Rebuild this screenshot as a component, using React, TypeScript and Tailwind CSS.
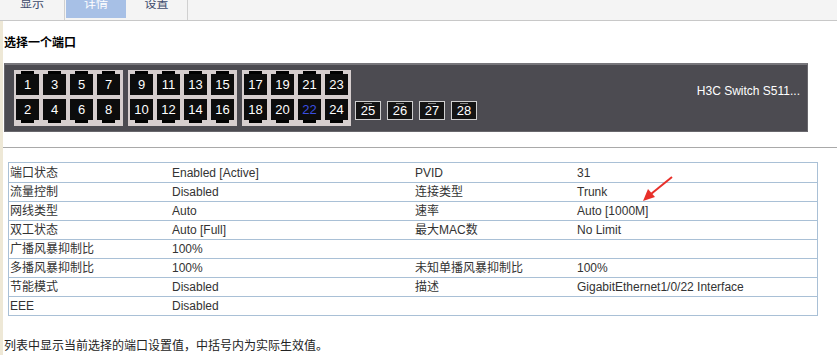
import React from 'react';

const groups = [
  { top: [1, 3, 5, 7], bottom: [2, 4, 6, 8] },
  { top: [9, 11, 13, 15], bottom: [10, 12, 14, 16] },
  { top: [17, 19, 21, 23], bottom: [18, 20, 22, 24] },
];

const rows: [string, string, string, string][] = [
  ['端口状态', 'Enabled [Active]', 'PVID', '31'],
  ['流量控制', 'Disabled', '连接类型', 'Trunk'],
  ['网线类型', 'Auto', '速率', 'Auto [1000M]'],
  ['双工状态', 'Auto [Full]', '最大MAC数', 'No Limit'],
  ['广播风暴抑制比', '100%', '', ''],
  ['多播风暴抑制比', '100%', '未知单播风暴抑制比', '100%'],
  ['节能模式', 'Disabled', '描述', 'GigabitEthernet1/0/22 Interface'],
  ['EEE', 'Disabled', '', ''],
];

const font = "font-['Liberation_Sans','Noto_Sans_CJK_SC',sans-serif]";

function Port({ n, up }: { n: number; up: boolean }) {
  const tab = <div className="mx-auto h-[3px] w-[13px] bg-black" />;
  return (
    <div className="flex w-[23px] flex-col">
      {up && tab}
      <div
        className={`flex h-[21px] w-[23px] items-center justify-center bg-[#0c0c0c] text-[13px] leading-none ${
          n === 22 ? 'text-[#3b4fe0]' : 'text-white'
        }`}
      >
        {n}
      </div>
      {!up && tab}
    </div>
  );
}

function Sfp({ n }: { n: number }) {
  return (
    <div className="relative flex h-[19px] w-[26px] items-center justify-center border border-[#d0d0d0] bg-[#141414] text-[13px] leading-none text-white">
      <div className="absolute left-[8px] top-[1px] h-[1px] w-[8px] bg-[#8a8a8a]" />
      {n}
    </div>
  );
}

export default function App() {
  return (
    <div className={`relative h-[355px] w-[837px] overflow-hidden bg-white text-[12px] text-[#333] ${font}`}>
      {/* tab bar */}
      <div className="flex h-[21px] border-b border-[#c8c8c8] bg-[#f4f4f4]">
        <div className="flex w-[65px] justify-center border-r border-[#d0d0d0] text-[#3d4a6b]">
          <span className="-mt-[3px] leading-[14px]">显示</span>
        </div>
        <div className="ml-[1px] flex h-[18px] w-[60px] justify-center bg-[#a7c0e6] text-white">
          <span className="-mt-[3px] leading-[14px]">详情</span>
        </div>
        <div className="flex w-[62px] justify-center border-r border-[#d0d0d0] text-[#3d4a6b]">
          <span className="-mt-[3px] leading-[14px]">设置</span>
        </div>
      </div>

      <div className="flex h-[334px]">
        <div className="w-[3px] bg-[#eee8d6]" />
        <div className="flex-1">
          <div className="mt-[15px] pl-[1px] font-bold leading-[14px] text-black">选择一个端口</div>

          {/* switch panel */}
          <div className="ml-[1px] mt-[13px] flex h-[69px] w-[804px] items-start border border-t-2 border-[#68676c] border-t-[#77767b] bg-[#4c4b51] pl-[9px] pt-[5px]">
            <div className="flex items-end gap-[5px]">
              {groups.map((g, i) => (
                <div key={i} className="flex flex-col gap-[4px] bg-[#d6cece] pb-[3px] pl-[2px] pr-[3px] pt-[1px]">
                  <div className="flex gap-[4px]">
                    {g.top.map((n) => (
                      <Port key={n} n={n} up />
                    ))}
                  </div>
                  <div className="flex gap-[4px]">
                    {g.bottom.map((n) => (
                      <Port key={n} n={n} up={false} />
                    ))}
                  </div>
                </div>
              ))}
              <div className="mb-[6px] ml-[-1px] flex gap-[6px]">
                {[25, 26, 27, 28].map((n) => (
                  <Sfp key={n} n={n} />
                ))}
              </div>
            </div>
            <div className="ml-auto mr-[7px] mt-[12px] text-white">H3C Switch S511...</div>
          </div>

          <div className="mt-[15px] border-t border-[#a9a9a9]" />

          {/* detail table */}
          <div className="ml-[5px] mt-[14px] w-[810px] border border-[#a9c0d6]">
            {rows.map((r, i) => (
              <div
                key={i}
                className={`grid h-[19px] grid-cols-[163px_243px_162px_1fr] items-center leading-[14px] ${
                  i > 0 ? 'border-t border-[#a9c0d6]' : ''
                }`}
              >
                <div className="pl-[1px]">{r[0]}</div>
                <div>{r[1]}</div>
                <div>{r[2]}</div>
                <div>{r[3]}</div>
              </div>
            ))}
          </div>

          <div className="mt-[23px] pl-[1px] leading-[14px] text-[#222]">
            列表中显示当前选择的端口设置值，中括号内为实际生效值。
          </div>
        </div>
      </div>

      {/* red arrow annotation */}
      <svg className="absolute left-[640px] top-[174px]" width="36" height="30" viewBox="0 0 36 30">
        <line x1="32" y1="3" x2="11" y2="20" stroke="#e8302a" strokeWidth="2" />
        <polygon points="3,27 8,15 15,23" fill="#e8302a" />
      </svg>
    </div>
  );
}
